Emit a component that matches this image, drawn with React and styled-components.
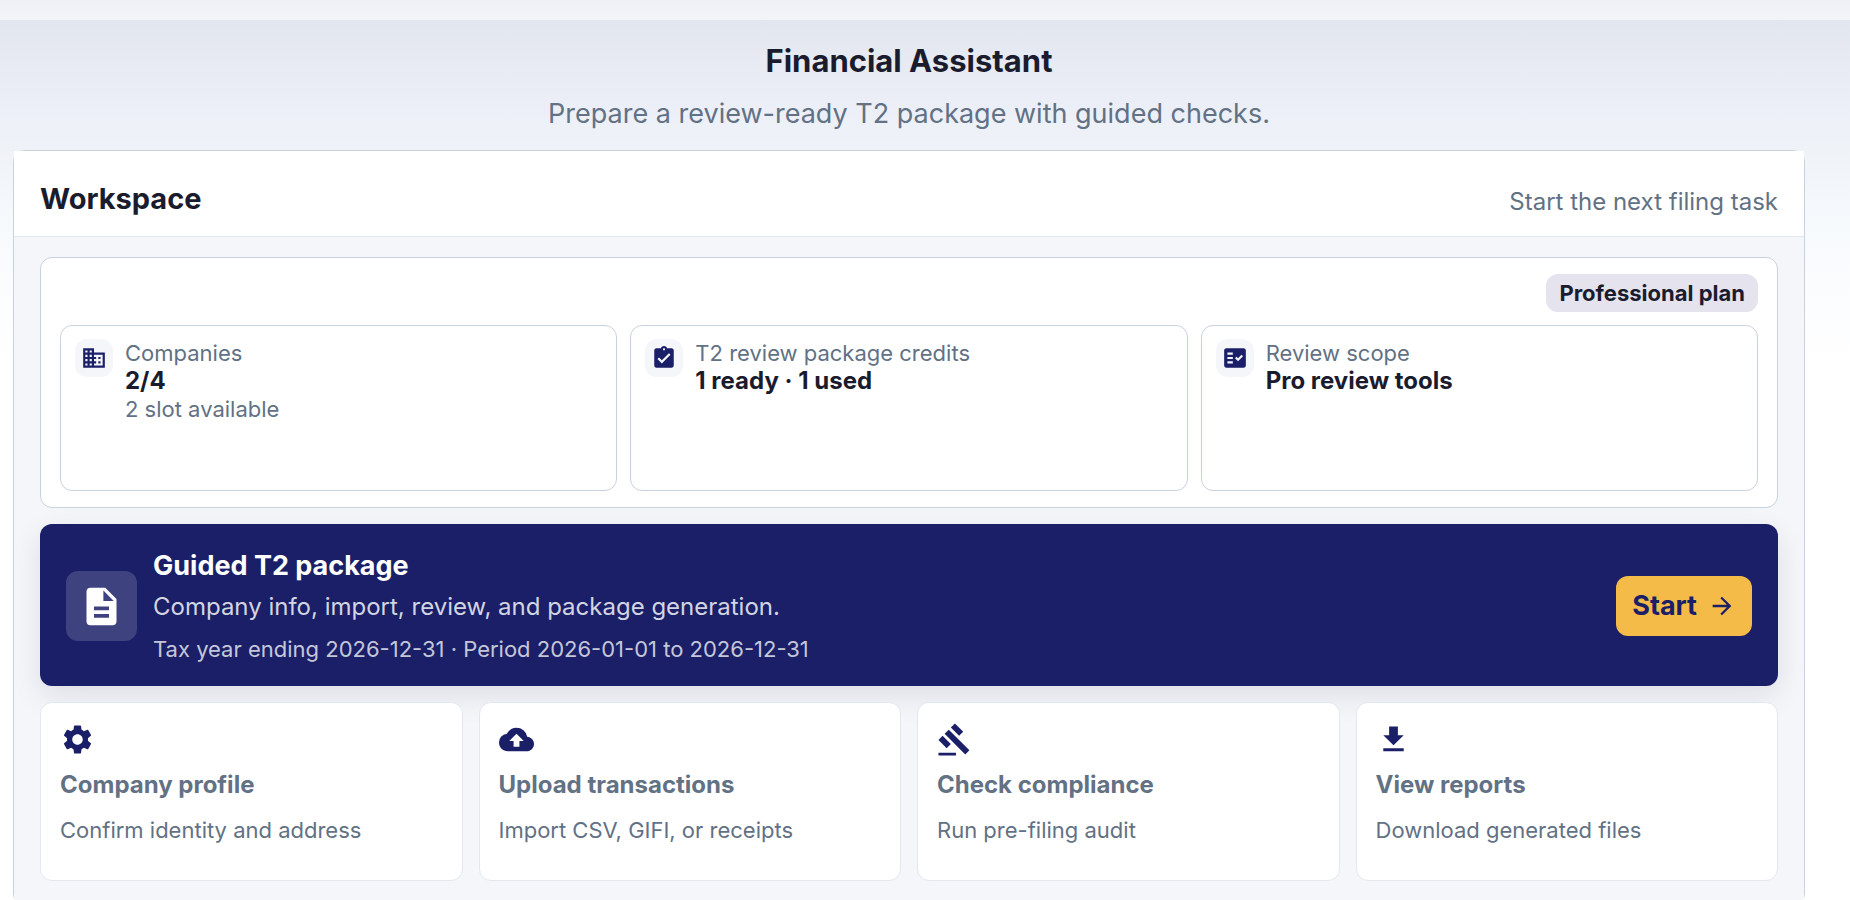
import React from "react";
import styled, { createGlobalStyle } from "styled-components";
import {
  MdArrowForward,
  MdAssignmentTurnedIn,
  MdBackup,
  MdBusiness,
  MdDescription,
  MdFactCheck,
  MdFileDownload,
  MdGavel,
  MdSettings,
} from "react-icons/md";

const stats = [
  { label: "Companies", value: "2/4", note: "2 slot available", icon: MdBusiness },
  { label: "T2 review package credits", value: "1 ready · 1 used", icon: MdAssignmentTurnedIn },
  { label: "Review scope", value: "Pro review tools", icon: MdFactCheck },
];

const tasks = [
  { title: "Company profile", text: "Confirm identity and address", icon: MdSettings },
  { title: "Upload transactions", text: "Import CSV, GIFI, or receipts", icon: MdBackup },
  { title: "Check compliance", text: "Run pre-filing audit", icon: MdGavel },
  { title: "View reports", text: "Download generated files", icon: MdFileDownload },
];

const Stat = ({ label, value, note, icon: Icon }) => (
  <StatCard>
    <StatIcon>
      <Icon size={26} />
    </StatIcon>
    <div>
      <StatText>{label}</StatText>
      <StatValue>{value}</StatValue>
      {note && <StatText>{note}</StatText>}
    </div>
  </StatCard>
);

const Task = ({ title, text, icon: Icon }) => (
  <TaskCard href="#">
    <Icon size={35} />
    <TaskTitle>{title}</TaskTitle>
    <TaskText>{text}</TaskText>
  </TaskCard>
);

const App = () => {
  return (
    <>
      <GlobalStyle />
      <TopBar />
      <Page>
        <Intro>
          <Title>Financial Assistant</Title>
          <Subtitle>Prepare a review-ready T2 package with guided checks.</Subtitle>
        </Intro>
        <Panel>
          <PanelHeader>
            <PanelTitle>Workspace</PanelTitle>
            <PanelHint>Start the next filing task</PanelHint>
          </PanelHeader>
          <PanelBody>
            <Summary>
              <Plan>Professional plan</Plan>
              <Stats>
                {stats.map((stat) => (
                  <Stat key={stat.label} {...stat} />
                ))}
              </Stats>
            </Summary>
            <Banner>
              <BannerIcon>
                <MdDescription size={45} />
              </BannerIcon>
              <BannerContent>
                <BannerTitle>Guided T2 package</BannerTitle>
                <BannerText>Company info, import, review, and package generation.</BannerText>
                <BannerMeta>
                  Tax year ending 2026-12-31 · Period 2026-01-01 to 2026-12-31
                </BannerMeta>
              </BannerContent>
              <Start type="button">
                Start
                <MdArrowForward size={28} />
              </Start>
            </Banner>
            <Tasks>
              {tasks.map((task) => (
                <Task key={task.title} {...task} />
              ))}
            </Tasks>
          </PanelBody>
        </Panel>
      </Page>
    </>
  );
};

export default App;

const GlobalStyle = createGlobalStyle`
  * {
    box-sizing: border-box;
  }
  body {
    margin: 0;
    background: #ffffff;
    color: #1a1c2e;
    font-family: Inter, "Liberation Sans", sans-serif;
  }
  h1, h2, h3, p {
    margin: 0;
  }
  svg {
    display: block;
    flex-shrink: 0;
  }
`;

const TopBar = styled.div`
  height: 20px;
  background: linear-gradient(#f0f1f6, #f2f4f8);
`;

const Page = styled.main`
  padding: 20px 45px 0 13px;
  background: linear-gradient(#e2e6ee 0, #ebeef7 80px, #eff3f8 130px, #f7fafd 210px, #ffffff 350px);
`;

const Intro = styled.header`
  text-align: center;
  padding-bottom: 16px;
`;

const Title = styled.h1`
  font-size: 31px;
  line-height: 42px;
  font-weight: 700;
`;

const Subtitle = styled.p`
  margin-top: 12px;
  font-size: 27px;
  line-height: 40px;
  color: #627184;
`;

const Panel = styled.section`
  border: 1px solid #c8d1df;
  border-radius: 12px;
`;

const PanelHeader = styled.div`
  display: flex;
  align-items: flex-end;
  justify-content: space-between;
  padding: 26px 26px 16px;
  background: #ffffff;
  border-bottom: 1px solid #e2e8f0;
`;

const PanelTitle = styled.h2`
  font-size: 29px;
  line-height: 43px;
  font-weight: 700;
`;

const PanelHint = styled.p`
  font-size: 24px;
  line-height: 36px;
  color: #627184;
`;

const PanelBody = styled.div`
  display: flex;
  flex-direction: column;
  gap: 16px;
  padding: 20px 26px 24px;
  background: #f4f6fa;
`;

const Summary = styled.section`
  display: flex;
  flex-direction: column;
  align-items: flex-end;
  gap: 13px;
  padding: 16px 19px;
  background: #ffffff;
  border: 1px solid #c8d1df;
  border-radius: 12px;
`;

const Plan = styled.span`
  padding: 4px 13px;
  border-radius: 12px;
  background: #e4e3ee;
  font-size: 22px;
  line-height: 30px;
  font-weight: 700;
`;

const Stats = styled.div`
  display: grid;
  grid-template-columns: repeat(3, 1fr);
  gap: 13px;
  width: 100%;
`;

const StatCard = styled.div`
  display: flex;
  gap: 12px;
  min-height: 166px;
  padding: 13px 14px;
  border: 1px solid #c8d1df;
  border-radius: 12px;
`;

const StatIcon = styled.span`
  display: flex;
  align-items: center;
  justify-content: center;
  flex-shrink: 0;
  width: 38px;
  height: 38px;
  border-radius: 12px;
  background: #f4f6fa;
  color: #1a1f68;
`;

const StatText = styled.p`
  font-size: 22px;
  line-height: 28px;
  color: #627184;
`;

const StatValue = styled.p`
  font-size: 24px;
  line-height: 28px;
  font-weight: 700;
`;

const Banner = styled.section`
  display: flex;
  align-items: center;
  gap: 16px;
  padding: 21px 26px 19px;
  border-radius: 12px;
  background: #1a1f68;
  color: #ffffff;
  box-shadow: 0 10px 30px rgba(15, 23, 42, 0.1);
`;

const BannerIcon = styled.span`
  display: flex;
  align-items: center;
  justify-content: center;
  width: 71px;
  height: 70px;
  border-radius: 12px;
  background: rgba(255, 255, 255, 0.16);
`;

const BannerContent = styled.div`
  flex: 1;
`;

const BannerTitle = styled.h3`
  font-size: 27px;
  line-height: 42px;
  font-weight: 700;
`;

const BannerText = styled.p`
  font-size: 24px;
  line-height: 40px;
  color: rgba(255, 255, 255, 0.82);
`;

const BannerMeta = styled.p`
  margin-top: 4px;
  font-size: 22px;
  line-height: 36px;
  color: rgba(255, 255, 255, 0.76);
`;

const Start = styled.button`
  display: flex;
  align-items: center;
  gap: 11px;
  padding: 10px 16px;
  border: none;
  border-radius: 12px;
  background: #f5bb48;
  color: #1a1f68;
  font-family: inherit;
  font-size: 27px;
  line-height: 40px;
  font-weight: 700;
  cursor: pointer;
`;

const Tasks = styled.div`
  display: grid;
  grid-template-columns: repeat(4, 1fr);
  gap: 16px;
`;

const TaskCard = styled.a`
  position: relative;
  min-height: 179px;
  padding: 19px;
  border: 1px solid #e2e8f0;
  border-radius: 12px;
  background: #ffffff;
  color: #1a1f68;
  text-decoration: none;
`;

const TaskTitle = styled.h3`
  margin-top: 9px;
  font-size: 24px;
  line-height: 38px;
  font-weight: 700;
  color: #627184;
`;

const TaskText = styled.p`
  margin-top: 8px;
  font-size: 22px;
  line-height: 36px;
  color: #627184;
`;
